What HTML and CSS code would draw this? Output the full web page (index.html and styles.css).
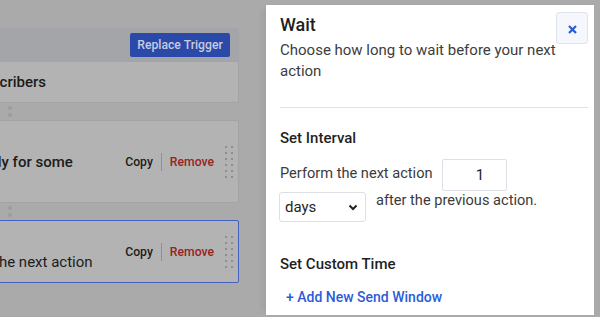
FILE: index.html
```html
<!DOCTYPE html>
<html lang="en">
<head>
<meta charset="utf-8">
<title>Wait</title>
<link rel="stylesheet" href="styles.css">
</head>
<body>
<div class="app">
  <main class="page">
    <div class="flow">
      <section class="card trigger">
        <div class="card-head">
          <button class="btn-primary" type="button">Replace Trigger</button>
        </div>
        <div class="card-body">
          <div class="card-text t-trigger"><span class="card-title">Subscribers</span></div>
        </div>
      </section>
      <div class="connector"><i></i><i></i></div>
      <section class="card action">
        <div class="card-body">
          <div class="card-text t-delay"><span class="card-title">Only for some</span></div>
          <div class="card-tools">
            <button class="tool" type="button">Copy</button>
            <span class="tool-sep"></span>
            <button class="tool danger" type="button">Remove</button>
          </div>
          <div class="grip"><i></i><i></i><i></i><i></i><i></i><i></i><i></i><i></i><i></i><i></i><i></i><i></i></div>
        </div>
      </section>
      <div class="connector"><i></i><i></i></div>
      <section class="card action selected">
        <div class="card-body">
          <div class="card-text t-wait">
            <span class="card-title">Wait</span>
            <span class="card-desc">the next action</span>
          </div>
          <div class="card-tools">
            <button class="tool" type="button">Copy</button>
            <span class="tool-sep"></span>
            <button class="tool danger" type="button">Remove</button>
          </div>
          <div class="grip"><i></i><i></i><i></i><i></i><i></i><i></i><i></i><i></i><i></i><i></i><i></i><i></i></div>
        </div>
      </section>
    </div>
  </main>

  <aside class="drawer">
    <header class="drawer-head">
      <div class="head-text">
        <h1 class="drawer-title">Wait</h1>
        <p class="drawer-sub">Choose how long to wait before your next action</p>
      </div>
      <button class="close" type="button" aria-label="Close">
        <svg width="9" height="9" viewBox="0 0 9 9"><path d="M1 1L8 8M8 1L1 8" stroke="#2a5bd7" stroke-width="2.2" fill="none"/></svg>
      </button>
    </header>
    <hr class="divider">
    <h2 class="section-title">Set Interval</h2>
    <div class="interval-row">
      <span class="row-label">Perform the next action</span>
      <input class="num-input" type="text" value="1">
    </div>
    <div class="interval-row">
      <span class="select-wrap">
        <select class="unit-select"><option>days</option></select>
        <svg class="chev" width="10" height="7" viewBox="0 0 10 7"><path d="M1.5 1.5L5 5L8.5 1.5" stroke="#222" stroke-width="2" fill="none"/></svg>
      </span>
      <span class="row-label after">after the previous action.</span>
    </div>
    <h2 class="section-title custom">Set Custom Time</h2>
    <button class="link-btn" type="button">+ Add New Send Window</button>
  </aside>
</div>
</body>
</html>
```

FILE: styles.css
```css
html, body {
  margin: 0;
  height: 100%;
  overflow: hidden;
  background: #aaaaaa;
  font-family: Roboto, "Liberation Sans", sans-serif;
}

.app {
  display: flex;
  height: 317px;
}

/* ---------- dimmed page behind drawer ---------- */
.page {
  flex: 0 0 266px;
  overflow: hidden;
  padding-top: 28px;
  box-sizing: border-box;
}

.flow {
  display: flex;
  flex-direction: column;
  margin-left: -300px;
  margin-right: 27px;
}

.card {
  background: #b3b3b3;
  border: 1px solid #a3a3a3;
  border-radius: 2px;
  box-sizing: border-box;
}

.card-head {
  height: 34px;
  background: #a4a5a9;
  display: flex;
  justify-content: flex-end;
  align-items: center;
  padding-right: 9px;
  margin: -1px -1px 0 -1px;
}

.btn-primary {
  width: 100px;
  height: 24px;
  border: 0;
  border-radius: 2px;
  background: #2a49a8;
  color: #c6cce0;
  font: 500 12.2px/24px Roboto, "Liberation Sans", sans-serif;
  padding: 0;
}

.card-body {
  display: flex;
  align-items: center;
}

.trigger .card-body {
  height: 40px;
}

.action {
  height: 83px;
}

.action .card-body {
  height: 100%;
}

.action.selected {
  height: 63px;
  border-color: #4361c2;
}

.card-text {
  flex: 1;
  display: flex;
  flex-direction: column;
  white-space: nowrap;
  color: #1c1c1c;
}

.card-title {
  font-size: 15px;
  line-height: 20px;
  font-weight: 500;
}

.t-trigger { padding-left: 265px; }
.t-delay { padding-left: 278px; }
.t-wait { padding-left: 193px; }
.t-wait .card-title { visibility: hidden; }
.t-wait .card-desc { font-size: 15px; line-height: 22px; margin-top: 1px; margin-left: 100px; }

.card-tools {
  display: flex;
  align-items: center;
}

.tool {
  border: 0;
  background: none;
  padding: 0;
  font: 500 12.2px/18px Roboto, "Liberation Sans", sans-serif;
  color: #1c1c1c;
}

.tool.danger {
  color: #9a2222;
}

.tool-sep {
  width: 1px;
  height: 18px;
  background: #8f8f8f;
  margin: 0 8px;
}

.grip {
  display: grid;
  grid-template-columns: 2px 2px;
  column-gap: 4px;
  row-gap: 4px;
  margin-left: 11px;
  margin-right: 5px;
}

.grip i {
  width: 2px;
  height: 2px;
  background: #8e8e8e;
}

.connector {
  height: 17px;
  padding: 3px 0 0 308px;
  box-sizing: border-box;
  display: flex;
  flex-direction: column;
  gap: 3px;
}

.connector i {
  width: 4px;
  height: 4px;
  border-radius: 50%;
  background: #9c9c9c;
}

/* ---------- drawer ---------- */
.drawer {
  flex: 0 0 328px;
  margin: 5px 0 2px 0;
  background: #ffffff;
  box-sizing: border-box;
  padding: 7px 6px 0 14px;
  box-shadow: -8px 0 6px -4px rgba(0, 0, 0, 0.05);
  color: #3b3b3b;
}

.drawer-head {
  display: flex;
  align-items: flex-start;
}

.head-text {
  flex: 1;
  padding-top: 1px;
}

.drawer-title {
  margin: 0;
  font-size: 18px;
  line-height: 24px;
  font-weight: 500;
  color: #1f1f1f;
}

.drawer-sub {
  margin: 3px 0 0 0;
  font-size: 15px;
  line-height: 21px;
  color: #3d3d3d;
}

.close {
  width: 32px;
  height: 32px;
  margin-top: 0;
  border: 1px solid #dfe3ea;
  border-radius: 3px;
  background: #f5f7fc;
  display: flex;
  align-items: center;
  justify-content: center;
  padding: 2px 0 0 0;
}

.divider {
  border: 0;
  height: 1px;
  background: #e3e3e3;
  margin: 25px 0 0 0;
}

.section-title {
  margin: 20px 0 0 0;
  font-size: 15px;
  line-height: 20px;
  font-weight: 500;
  color: #1f1f1f;
}

.section-title + .interval-row {
  margin-top: 11px;
}

.interval-row {
  display: flex;
  align-items: flex-start;
}

.row-label {
  font-size: 14.6px;
  line-height: 20px;
  margin-top: 4px;
}

.row-label.after {
  margin-top: -1px;
  margin-left: 10px;
}

.num-input {
  width: 65px;
  height: 32px;
  box-sizing: border-box;
  margin-left: 9px;
  border: 1px solid #dcdfe5;
  border-radius: 2px;
  padding: 0 0 0 12px;
  text-align: center;
  font: 400 15px Roboto, "Liberation Sans", sans-serif;
  color: #1f1f1f;
  background: #fff;
}

.select-wrap {
  position: relative;
  display: block;
  margin-left: -1px;
  margin-top: 1px;
}

.unit-select {
  appearance: none;
  -webkit-appearance: none;
  width: 87px;
  height: 30px;
  box-sizing: border-box;
  border: 1px solid #dcdfe5;
  border-radius: 3px;
  background: #fff;
  padding: 0 0 0 5px;
  font: 400 15px Roboto, "Liberation Sans", sans-serif;
  color: #1f1f1f;
  display: block;
}

.chev {
  position: absolute;
  right: 8px;
  top: 12px;
  pointer-events: none;
}

.section-title.custom {
  margin-top: 32px;
}

.link-btn {
  display: block;
  margin-top: 13px;
  border: 0;
  background: none;
  padding: 0 0 0 6px;
  font: 500 14px/20px Roboto, "Liberation Sans", sans-serif;
  color: #2c5cd8;
}
```
